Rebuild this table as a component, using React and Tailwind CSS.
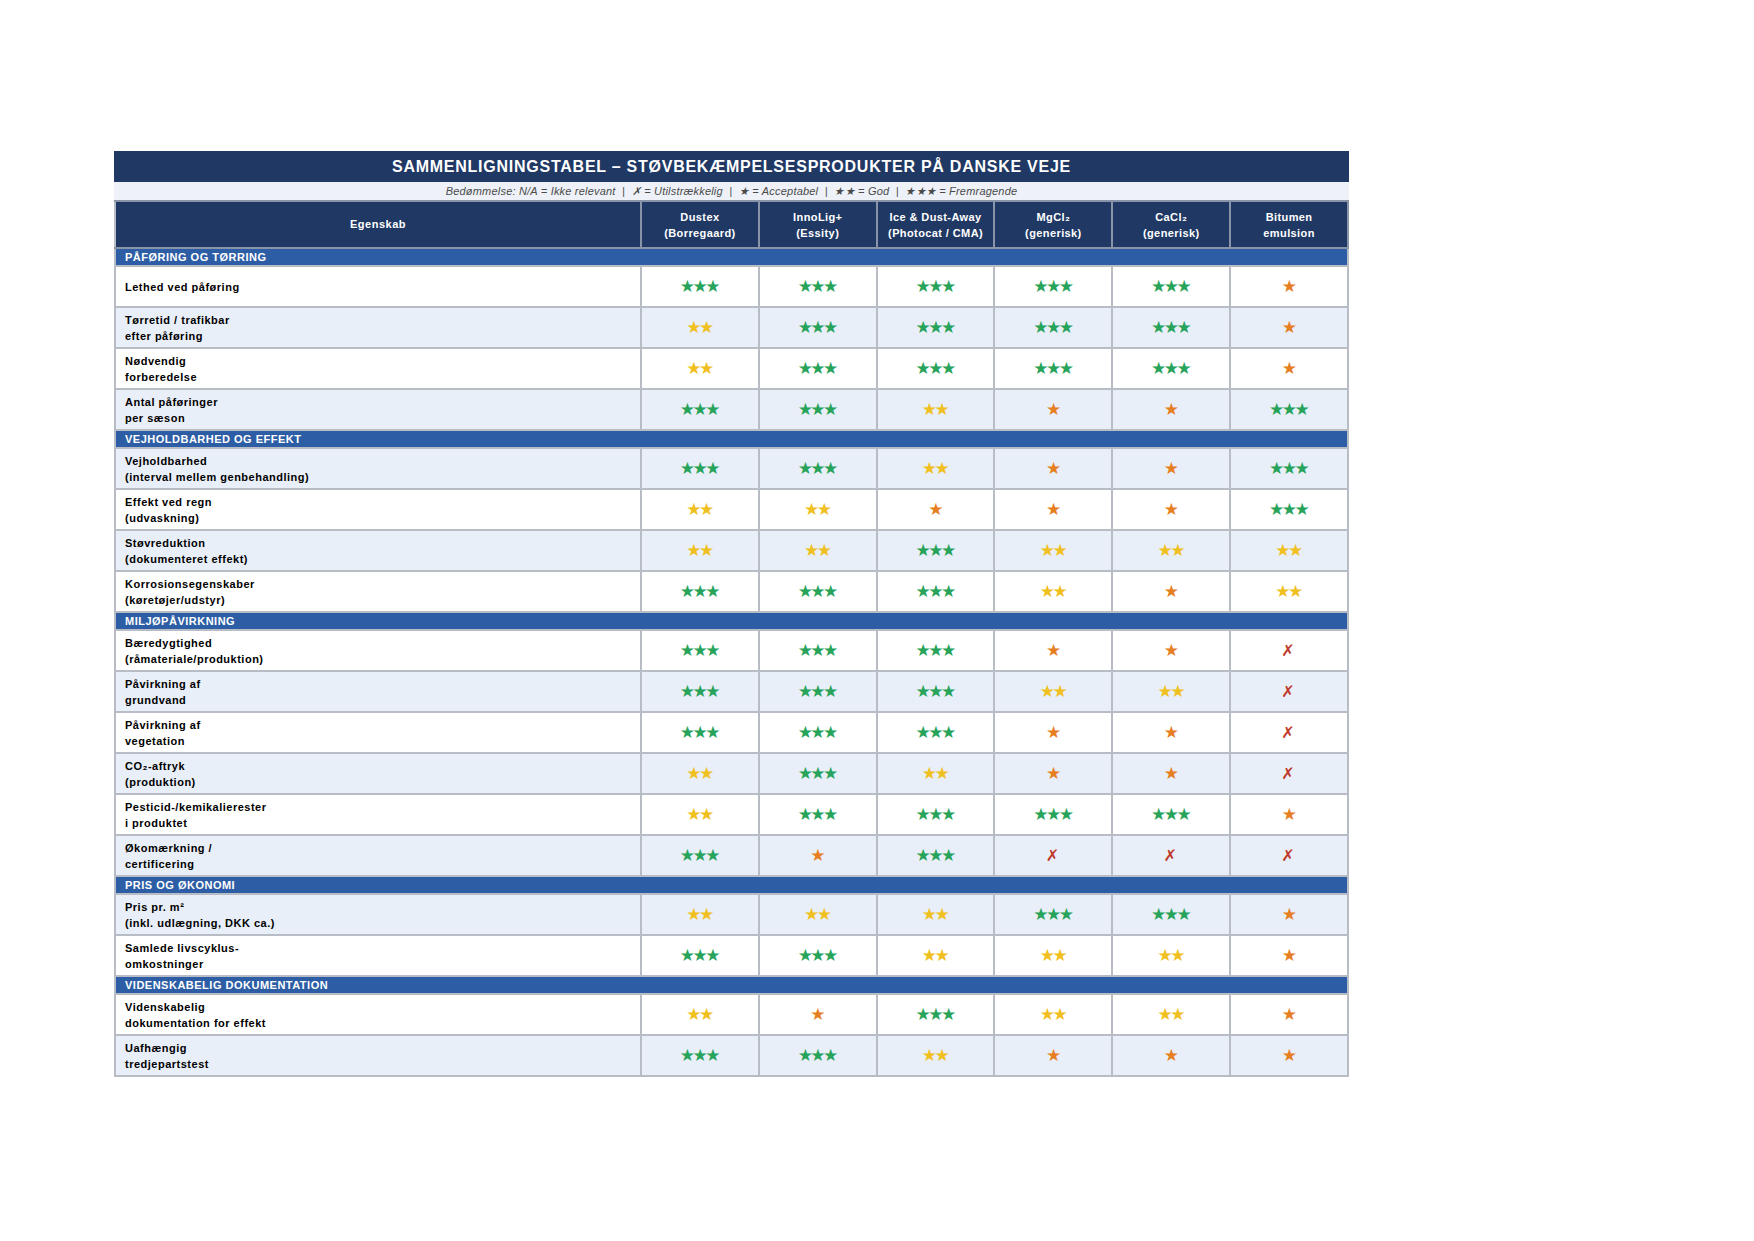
const products = [
  ["Dustex", "(Borregaard)"],
  ["InnoLig+", "(Essity)"],
  ["Ice & Dust-Away", "(Photocat / CMA)"],
  ["MgCl₂", "(generisk)"],
  ["CaCl₂", "(generisk)"],
  ["Bitumen", "emulsion"],
];

// 0 = utilstrækkelig (X), 1-3 = antal stjerner
const sections = [
  {
    title: "PÅFØRING OG TØRRING",
    rows: [
      [["Lethed ved påføring"], [3, 3, 3, 3, 3, 1]],
      [["Tørretid / trafikbar", "efter påføring"], [2, 3, 3, 3, 3, 1]],
      [["Nødvendig", "forberedelse"], [2, 3, 3, 3, 3, 1]],
      [["Antal påføringer", "per sæson"], [3, 3, 2, 1, 1, 3]],
    ],
  },
  {
    title: "VEJHOLDBARHED OG EFFEKT",
    rows: [
      [["Vejholdbarhed", "(interval mellem genbehandling)"], [3, 3, 2, 1, 1, 3]],
      [["Effekt ved regn", "(udvaskning)"], [2, 2, 1, 1, 1, 3]],
      [["Støvreduktion", "(dokumenteret effekt)"], [2, 2, 3, 2, 2, 2]],
      [["Korrosionsegenskaber", "(køretøjer/udstyr)"], [3, 3, 3, 2, 1, 2]],
    ],
  },
  {
    title: "MILJØPÅVIRKNING",
    rows: [
      [["Bæredygtighed", "(råmateriale/produktion)"], [3, 3, 3, 1, 1, 0]],
      [["Påvirkning af", "grundvand"], [3, 3, 3, 2, 2, 0]],
      [["Påvirkning af", "vegetation"], [3, 3, 3, 1, 1, 0]],
      [["CO₂-aftryk", "(produktion)"], [2, 3, 2, 1, 1, 0]],
      [["Pesticid-/kemikalierester", "i produktet"], [2, 3, 3, 3, 3, 1]],
      [["Økomærkning /", "certificering"], [3, 1, 3, 0, 0, 0]],
    ],
  },
  {
    title: "PRIS OG ØKONOMI",
    rows: [
      [["Pris pr. m²", "(inkl. udlægning, DKK ca.)"], [2, 2, 2, 3, 3, 1]],
      [["Samlede livscyklus-", "omkostninger"], [3, 3, 2, 2, 2, 1]],
    ],
  },
  {
    title: "VIDENSKABELIG DOKUMENTATION",
    rows: [
      [["Videnskabelig", "dokumentation for effekt"], [2, 1, 3, 2, 2, 1]],
      [["Uafhængig", "tredjepartstest"], [3, 3, 2, 1, 1, 1]],
    ],
  },
];

function Rating({ value }) {
  if (value === 0) {
    return <span className="font-['DejaVu_Sans',sans-serif] text-[16px] text-[#c0392b]">✗</span>;
  }
  const color =
    value === 3 ? "text-[#27a35a]" : value === 2 ? "text-[#f0c020]" : "text-[#e67e22]";
  return (
    <span className={`font-['DejaVu_Sans',sans-serif] text-[17px] tracking-[-2.5px] ${color}`}>
      {"★".repeat(value)}
    </span>
  );
}

export default function App() {
  // sektionsrækker tæller med i vekslingen: ulige = hvid, lige = lyseblå
  let idx = -1;
  const body = [];
  sections.forEach((s) => {
    idx++;
    body.push(
      <tr key={s.title} className="h-[18px] bg-[#2d5ea5]">
        <td
          colSpan={7}
          className="border-2 border-[#b8bcc4] px-[9px] py-0 text-[11px] font-bold leading-[14px] tracking-[0.5px] text-white"
        >
          {s.title}
        </td>
      </tr>
    );
    s.rows.forEach(([label, vals]) => {
      idx++;
      const bg = idx % 2 === 1 ? "bg-white" : "bg-[#e9eff9]";
      body.push(
        <tr key={label.join()} className={`h-[41px] ${bg}`}>
          <td className="border-2 border-[#b8bcc4] px-[9px] py-0 text-[11px] font-bold leading-[16px] tracking-[0.5px] text-black">
            {label.map((l) => (
              <div key={l}>{l}</div>
            ))}
          </td>
          {vals.map((v, i) => (
            <td key={i} className="border-2 border-[#b8bcc4] p-0 pr-[2px] text-center leading-none">
              <Rating value={v} />
            </td>
          ))}
        </tr>
      );
    });
  });

  return (
    <div className="min-h-[1241px] bg-white pl-[114px] pt-[151px] font-['Liberation_Sans',Arial,sans-serif]">
      <div className="w-[1235px]">
        <div className="flex h-[31px] items-center justify-center bg-[#1f3864] text-[16px] font-bold tracking-[0.75px] text-white">
          SAMMENLIGNINGSTABEL – STØVBEKÆMPELSESPRODUKTER PÅ DANSKE VEJE
        </div>
        <div className="flex h-[18px] items-center justify-center bg-[#eef2f8] text-[11px] italic tracking-[0.2px] text-[#4a4a4a]">
          Bedømmelse: N/A = Ikke relevant&nbsp; | &nbsp;✗ = Utilstrækkelig&nbsp; | &nbsp;★ = Acceptabel&nbsp; | &nbsp;★★ = God&nbsp; | &nbsp;★★★ = Fremragende
        </div>
        <table className="w-full table-fixed border-collapse">
          <colgroup>
            <col className="w-[526px]" />
            <col />
            <col />
            <col />
            <col />
            <col />
            <col />
          </colgroup>
          <thead>
            <tr className="h-[47px] bg-[#1f3864] text-white">
              <th className="border-2 border-[#8a94a8] border-l-[#b8bcc4] text-[11px] font-bold tracking-[0.5px]">
                Egenskab
              </th>
              {products.map(([a, b]) => (
                <th
                  key={a}
                  className="border-2 border-[#8a94a8] text-[11px] font-bold leading-[16px] tracking-[0.4px]"
                >
                  <div>{a}</div>
                  <div>{b}</div>
                </th>
              ))}
            </tr>
          </thead>
          <tbody>{body}</tbody>
        </table>
      </div>
    </div>
  );
}
